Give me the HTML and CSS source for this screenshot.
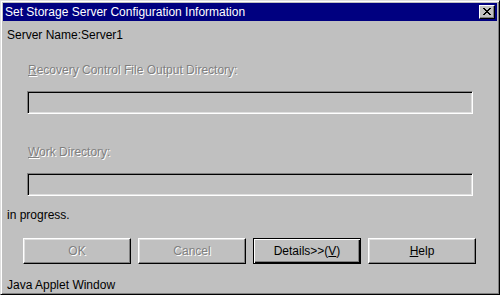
FILE: index.html
```html
<!DOCTYPE html>
<html>
<head>
<meta charset="utf-8">
<link rel="stylesheet" href="styles.css">
</head>
<body>
<div class="window">
  <div class="titlebar">
    <span class="title">Set Storage Server Configuration Information</span>
    <span class="close">
      <svg width="8" height="7" viewBox="0 0 8 7" shape-rendering="crispEdges">
        <rect x="0" y="0" width="2" height="1"/><rect x="6" y="0" width="2" height="1"/>
        <rect x="1" y="1" width="2" height="1"/><rect x="5" y="1" width="2" height="1"/>
        <rect x="2" y="2" width="4" height="1"/>
        <rect x="3" y="3" width="2" height="1"/>
        <rect x="2" y="4" width="4" height="1"/>
        <rect x="1" y="5" width="2" height="1"/><rect x="5" y="5" width="2" height="1"/>
        <rect x="0" y="6" width="2" height="1"/><rect x="6" y="6" width="2" height="1"/>
      </svg>
    </span>
  </div>
  <div class="content">
    <div class="line server">Server Name:Server1</div>
    <div class="group first">
      <div class="line label disabled"><u>R</u>ecovery Control File Output Directory:</div>
      <div class="field"></div>
    </div>
    <div class="group second">
      <div class="line label disabled"><u>W</u>ork Directory:</div>
      <div class="field"></div>
    </div>
    <div class="line status">in progress.</div>
    <div class="buttons">
      <div class="btn disabled">OK</div>
      <div class="btn disabled">Cancel</div>
      <div class="btn default">Details&gt;&gt;(<u>V</u>)</div>
      <div class="btn"><u>H</u>elp</div>
    </div>
    <div class="line footer">Java Applet Window</div>
  </div>
</div>
</body>
</html>
```

FILE: styles.css
```css
html, body {
  margin: 0;
  padding: 0;
  background: #c0c0c0;
}

.window {
  box-sizing: border-box;
  width: 500px;
  height: 295px;
  background: #c0c0c0;
  border-top: 1px solid #dfdfdf;
  border-left: 1px solid #dfdfdf;
  border-right: 1px solid #000;
  border-bottom: 1px solid #000;
  box-shadow: inset 1px 1px 0 #fff, inset -1px -1px 0 #808080;
  padding: 2px;
  display: flex;
  flex-direction: column;
  font-family: "Liberation Sans", Arial, sans-serif;
  font-size: 12px;
  line-height: 14px;
  color: #000;
}

.titlebar {
  height: 18px;
  background: #000080;
  color: #fff;
  display: flex;
  align-items: flex-start;
  justify-content: space-between;
  padding: 0 2px 0 2px;
  box-sizing: border-box;
}

.title {
  padding-top: 2px;
  line-height: 14px;
}

.close {
  margin-top: 2px;
  width: 16px;
  height: 14px;
  box-sizing: border-box;
  background: #c0c0c0;
  border-top: 1px solid #fff;
  border-left: 1px solid #fff;
  border-right: 1px solid #000;
  border-bottom: 1px solid #000;
  box-shadow: inset -1px -1px 0 #808080;
  display: flex;
  align-items: center;
  justify-content: center;
  padding: 0 1px 1px 0;
}

.close svg {
  display: block;
  fill: #000;
}

.content {
  flex: 1;
  display: flex;
  flex-direction: column;
  padding-top: 7px;
}

.line {
  height: 14px;
  white-space: nowrap;
}

.server, .status, .footer {
  padding-left: 4px;
}

.group {
  padding: 0 24px;
  display: flex;
  flex-direction: column;
  gap: 14px;
}

.group.first {
  margin-top: 21px;
}

.group.second {
  margin-top: 31px;
}

.label {
  padding-left: 1px;
}

.disabled {
  color: #808080;
  text-shadow: 1px 1px 0 #fff;
}

.field {
  height: 23px;
  box-sizing: border-box;
  background: #c0c0c0;
  border-top: 1px solid #808080;
  border-left: 1px solid #808080;
  border-right: 1px solid #fff;
  border-bottom: 1px solid #fff;
  box-shadow: inset 1px 1px 0 #000, inset -1px -1px 0 #dfdfdf;
}

.status {
  margin-top: 12px;
}

.buttons {
  margin-top: 16px;
  display: flex;
  gap: 7px;
  padding-left: 20px;
}

.btn {
  width: 108px;
  height: 26px;
  box-sizing: border-box;
  background: #c0c0c0;
  border-top: 1px solid #fff;
  border-left: 1px solid #fff;
  border-right: 1px solid #000;
  border-bottom: 1px solid #000;
  box-shadow: inset -1px -1px 0 #808080, inset 1px 1px 0 #dfdfdf;
  display: flex;
  align-items: center;
  justify-content: center;
  padding-bottom: 1px;
}

.btn.default {
  border: 1px solid #000;
  box-shadow: inset 1px 1px 0 #fff, inset -1px -1px 0 #000, inset -2px -2px 0 #808080;
}

.footer {
  margin-top: 14px;
}
```
